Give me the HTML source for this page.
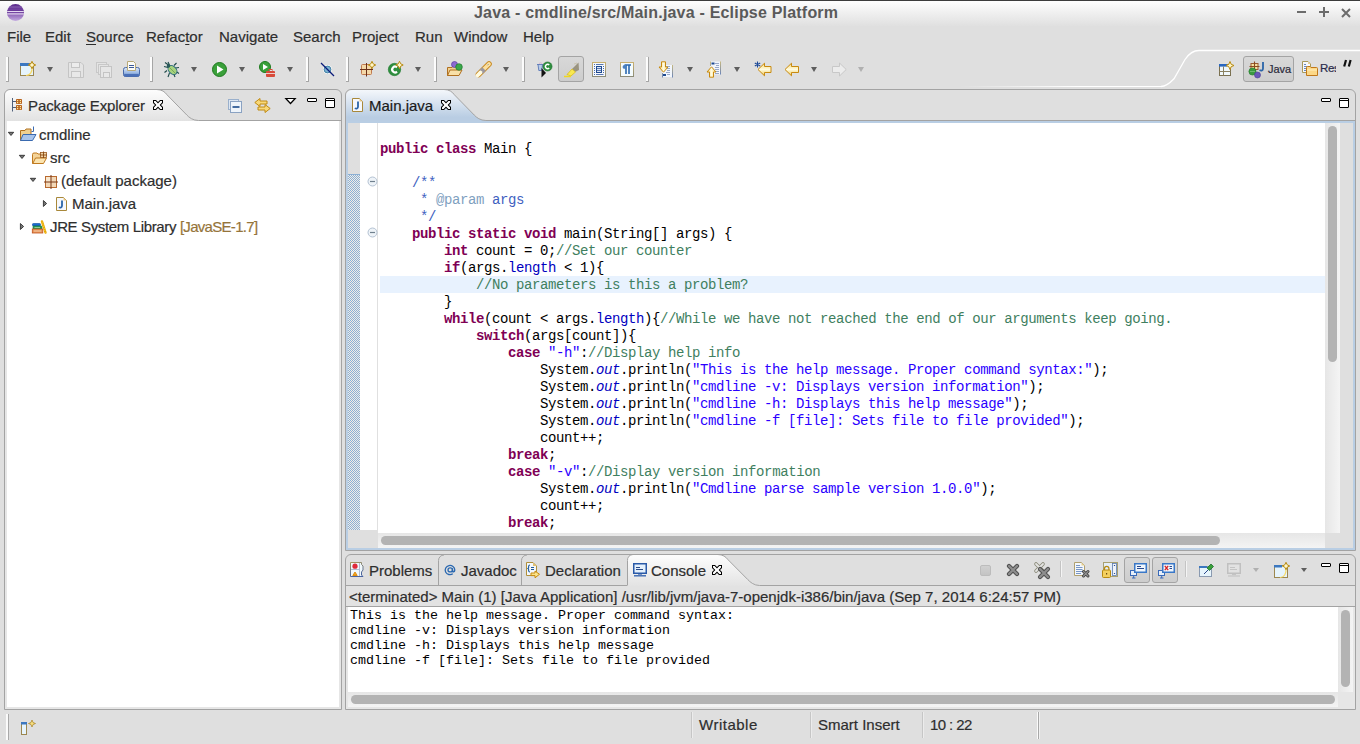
<!DOCTYPE html>
<html><head><meta charset="utf-8">
<style>
*{margin:0;padding:0;box-sizing:border-box}
html,body{width:1360px;height:744px;overflow:hidden;background:#dfdfdf;font-family:"Liberation Sans",sans-serif;position:relative}
.a{position:absolute}
svg{position:absolute;overflow:visible}
#title{left:0;top:0;width:1360px;height:26px;background:linear-gradient(#3c3c3c 0,#3c3c3c 1px,#fefefe 1px,#f4f4f4 9px,#e0e0e0 26px)}
#title .t{left:474px;top:3px;font-weight:bold;font-size:16px;line-height:19px;color:#5a5a5a;letter-spacing:0.2px;white-space:nowrap}
.m{top:28px;font-size:15px;line-height:17px;color:#2e2e2e;white-space:nowrap;-webkit-text-stroke:0.2px #2e2e2e}
.ui{font-size:15px;line-height:17px;color:#2e2e2e;white-space:nowrap;-webkit-text-stroke:0.2px currentColor}
.mono{font-family:"Liberation Mono",monospace}
.code{left:380px;top:124px;font-family:"Liberation Mono",monospace;font-size:14px;letter-spacing:-0.4px;line-height:17px;white-space:pre;color:#000}
.k{color:#7f0055;font-weight:bold}
.c{color:#3f7f5f}
.s{color:#2a00ff}
.f{color:#0000c0}
.jd{color:#3f5fbf}
.jt{color:#7f9fbf}
.o{color:#0000c0;font-style:italic}
.sep{width:3px;height:26px;top:56px;background:linear-gradient(90deg,#fcfcfc 0,#fcfcfc 2px,#a6a6a6 2px);border-bottom:1px solid #a6a6a6;border-top:1px solid #d8d8d8}
.dd{top:67px;width:0;height:0;border-left:3.5px solid transparent;border-right:3.5px solid transparent;border-top:5px solid #5e5e5e}
.ddg{border-top-color:#b0b0b0}
</style></head><body>
<!-- title bar -->
<div id="title" class="a">
  <div class="a t">Java - cmdline/src/Main.java - Eclipse Platform</div>
  <svg style="left:7px;top:4px" width="17" height="17" viewBox="0 0 17 17">
    <defs><linearGradient id="eg" x1="0" y1="0" x2="0" y2="1"><stop offset="0" stop-color="#5a2a8a"/><stop offset="0.45" stop-color="#7a4aa8"/><stop offset="1" stop-color="#c4ace0"/></linearGradient>
    <clipPath id="ec"><circle cx="8.5" cy="8.5" r="8.5"/></clipPath></defs>
    <circle cx="8.5" cy="8.5" r="8.5" fill="url(#eg)"/>
    <g clip-path="url(#ec)">
    <rect x="0" y="2.5" width="17" height="1" fill="#9a78c0" opacity="0.7"/>
    <rect x="0" y="7" width="17" height="1.2" fill="#e4d8f0"/>
    <rect x="0" y="8.3" width="17" height="0.9" fill="#6a3a9a"/>
    <rect x="0" y="9.3" width="17" height="1.2" fill="#e4d8f0"/>
    <rect x="0" y="6" width="17" height="1" fill="#6a3a9a"/>
    </g>
  </svg>
  <div class="a" style="left:1297px;top:11px;width:9px;height:2px;background:#6c6c6c"></div>
  <div class="a" style="left:1319px;top:11px;width:10px;height:2px;background:#6c6c6c"></div>
  <div class="a" style="left:1323px;top:7px;width:2px;height:10px;background:#6c6c6c"></div>
  <svg style="left:1341px;top:8px" width="10" height="10" viewBox="0 0 10 10"><path d="M1 1L9 9M9 1L1 9" stroke="#6c6c6c" stroke-width="2"/></svg>
</div>
<!-- menu -->
<div class="a m" style="left:7px">File</div>
<div class="a m" style="left:45px">Edit</div>
<div class="a m" style="left:86px"><u style="text-decoration-thickness:1px;text-underline-offset:2px">S</u>ource</div>
<div class="a m" style="left:146px">Refac<u style="text-decoration-thickness:1px;text-underline-offset:2px">t</u>or</div>
<div class="a m" style="left:219px">Navigate</div>
<div class="a m" style="left:293px">Search</div>
<div class="a m" style="left:352px">Project</div>
<div class="a m" style="left:415px">Run</div>
<div class="a m" style="left:454px">Window</div>
<div class="a m" style="left:523px">Help</div>
<!-- toolbar separators -->
<div class="a sep" style="left:6px"></div>
<div class="a sep" style="left:150px"></div>
<div class="a sep" style="left:306px"></div>
<div class="a sep" style="left:346px"></div>
<div class="a sep" style="left:434px"></div>
<div class="a sep" style="left:522px"></div>
<div class="a sep" style="left:646px"></div>
<!-- dropdowns -->
<div class="a dd" style="left:47px"></div>
<div class="a dd" style="left:191px"></div>
<div class="a dd" style="left:239px"></div>
<div class="a dd" style="left:287px"></div>
<div class="a dd" style="left:415px"></div>
<div class="a dd" style="left:503px"></div>
<div class="a dd" style="left:687px"></div>
<div class="a dd" style="left:734px"></div>
<div class="a dd" style="left:811px"></div>
<div class="a dd ddg" style="left:858px"></div>
<!-- new wizard -->
<svg style="left:20px;top:61px" width="16" height="16" viewBox="0 0 16 16">
 <rect x="0.5" y="2.5" width="13" height="12" fill="#e6f4fc" stroke="#9c8750"/>
 <rect x="0" y="2" width="9" height="3" fill="#3c78c0"/>
 <path d="M6 14.5C10 14.5 12.5 11 12 6" stroke="#f8d860" fill="none" stroke-width="1.2"/>
 <path d="M12 0.3L13.2 2.8L15.7 4L13.2 5.2L12 7.7L10.8 5.2L8.3 4L10.8 2.8Z" fill="#fff6c8" stroke="#b88a10" stroke-width="1"/>
</svg>
<!-- save (disabled) -->
<svg style="left:68px;top:62px" width="16" height="16" viewBox="0 0 16 16">
 <path d="M0.5 0.5H13L15.5 3V15.5H0.5Z" fill="#e4e4e4" stroke="#c4c4c4"/>
 <rect x="3.5" y="0.5" width="8" height="5" fill="#ececec" stroke="#c4c4c4"/>
 <rect x="3.5" y="9.5" width="9" height="6" fill="#e8e8e8" stroke="#c4c4c4"/>
</svg>
<!-- save all (disabled) -->
<svg style="left:96px;top:62px" width="16" height="16" viewBox="0 0 16 16">
 <rect x="0.5" y="0.5" width="10" height="10" fill="#e4e4e4" stroke="#c8c8c8"/>
 <rect x="2.5" y="2.5" width="10" height="10" fill="#e4e4e4" stroke="#c8c8c8"/>
 <rect x="4.5" y="4.5" width="11" height="11" fill="#e6e6e6" stroke="#c4c4c4"/>
 <rect x="7.5" y="10.5" width="6" height="5" fill="#e8e8e8" stroke="#c4c4c4"/>
</svg>
<!-- print -->
<svg style="left:123px;top:61px" width="17" height="17" viewBox="0 0 17 17">
 <defs><linearGradient id="pr" x1="0" y1="0" x2="0" y2="1"><stop offset="0" stop-color="#dce8f8"/><stop offset="0.6" stop-color="#9ab8e4"/><stop offset="1" stop-color="#4a72b8"/></linearGradient></defs>
 <rect x="0.5" y="6.5" width="16" height="9" rx="2" fill="url(#pr)" stroke="#4a6aa8"/>
 <path d="M4.5 0.5H10.5L12.5 2.5V9.5H4.5Z" fill="#fbfbf6" stroke="#b8a878"/>
 <path d="M6 4.5H11M6 6.5H11" stroke="#3a5a9a" stroke-width="1.1"/>
 <rect x="1" y="13" width="15" height="2.5" rx="1" fill="#4a70b8"/>
</svg>
<!-- debug bug -->
<svg style="left:163px;top:61px" width="17" height="17" viewBox="0 0 17 17">
 <g stroke="#1e4a4a" stroke-width="1.1" fill="none">
 <path d="M1 5.5L5 6.5M2 1.5L5.5 4M5 1L6.5 4"/>
 <path d="M4 9.5L1.5 11.5M6.5 12L5 16"/>
 <path d="M11 4.5L13.5 2M12.5 7L16 6.5"/>
 <path d="M13 10.5L16 12.5M10.5 12.5L12 16"/>
 </g>
 <ellipse cx="9.5" cy="9" rx="3.6" ry="5.2" transform="rotate(-45 9.5 9)" fill="#a6d27e" stroke="#2a6a7a" stroke-width="1"/>
 <path d="M7 7L12 12" stroke="#6aa050" stroke-width="0.8"/>
 <circle cx="5.5" cy="5" r="1.8" fill="#2a5a5a"/>
</svg>
<!-- run -->
<svg style="left:212px;top:62px" width="15" height="15" viewBox="0 0 15 15">
 <circle cx="7.5" cy="7.5" r="7" fill="#3aa03a" stroke="#1e7a1e"/>
 <path d="M5 3.5L11.5 7.5L5 11.5Z" fill="#fff"/>
</svg>
<!-- run ext -->
<svg style="left:259px;top:61px" width="17" height="17" viewBox="0 0 17 17">
 <circle cx="6" cy="6" r="5.5" fill="#3aa03a" stroke="#1e7a1e"/>
 <path d="M4 3L9 6L4 9Z" fill="#fff"/>
 <rect x="7" y="10" width="9" height="6" rx="1" fill="#d84a3a"/>
 <rect x="10" y="8.5" width="3" height="2" fill="none" stroke="#d84a3a"/>
 <path d="M7 12.5H16" stroke="#f0f0f0" stroke-width="0.8"/>
</svg>
<!-- skip breakpoints -->
<svg style="left:320px;top:62px" width="15" height="15" viewBox="0 0 15 15">
 <circle cx="7.5" cy="7.5" r="4.5" fill="#fff" opacity="0.8"/>
 <circle cx="7.5" cy="7.5" r="3.4" fill="#7ab0d0" stroke="#3a7aa0" stroke-width="0.9"/>
 <path d="M1 1L14 14" stroke="#0a1a7a" stroke-width="1.3"/>
</svg>
<!-- new package -->
<svg style="left:360px;top:61px" width="17" height="16" viewBox="0 0 17 16">
 <rect x="1.5" y="3.5" width="10" height="10" rx="1" fill="#f4d8a8" stroke="#c07a50"/>
 <path d="M6.5 2V15.5M0 8.5H13" stroke="#6a3018" stroke-width="1"/>
 <path d="M12 0.3L13.2 2.8L15.7 4L13.2 5.2L12 7.7L10.8 5.2L8.3 4L10.8 2.8Z" fill="#fff6c8" stroke="#b88a10" stroke-width="1"/>
</svg>
<!-- new class -->
<svg style="left:388px;top:61px" width="17" height="16" viewBox="0 0 17 16">
 <circle cx="6.5" cy="8.5" r="6.2" fill="#2e8e3e" stroke="#1e7a2e" stroke-width="0.6"/>
 <path d="M9 6.3A2.9 2.9 0 1 0 9 10.7" stroke="#fff" stroke-width="2.2" fill="none"/>
 <path d="M11.5 0.3L12.7 2.8L15.2 4L12.7 5.2L11.5 7.7L10.3 5.2L7.8 4L10.3 2.8Z" fill="#fff6c8" stroke="#b88a10" stroke-width="1"/>
</svg>
<!-- open type -->
<svg style="left:447px;top:61px" width="17" height="17" viewBox="0 0 17 17">
 <path d="M0.5 6.5H5L6 5H11V14.5H0.5Z" fill="#f0d090" stroke="#b07020"/>
 <path d="M0.5 14.5L3 9H15L12 14.5Z" fill="#f8e0a8" stroke="#b07020"/>
 <circle cx="7.5" cy="3.5" r="3" fill="#8a6ad0" stroke="#5a3aa0" stroke-width="0.7"/>
 <circle cx="12" cy="6" r="3.3" fill="#3aa84a" stroke="#1e7a2e" stroke-width="0.7"/>
</svg>
<!-- search pencil -->
<svg style="left:475px;top:61px" width="17" height="17" viewBox="0 0 17 17">
 <path d="M14 3L3.5 13.5" stroke="#c88a20" stroke-width="5.6" stroke-linecap="round"/>
 <path d="M14 3L3.5 13.5" stroke="#fbe0a0" stroke-width="3.8" stroke-linecap="round"/>
 <path d="M9 8L6 11" stroke="#9c98a0" stroke-width="5"/>
 <path d="M5.5 11.5L2.5 14.5" stroke="#fffbe0" stroke-width="3.6" stroke-linecap="round"/>
 <path d="M12.5 4.2L13.2 3.5" stroke="#2a5aa8" stroke-width="1"/>
</svg>
<!-- mark occurrences-ish icon (partial) -->
<svg style="left:536px;top:61px" width="17" height="17" viewBox="0 0 17 17">
 <path d="M1 3.5H7.5M2 3.5L2.8 9.5H5.8L6.5 3.5" fill="#b8cce8" stroke="#5a78b8" stroke-width="0.9"/>
 <path d="M3 2.5Q4.5 1 6 2.5" stroke="#d8a8d0" fill="none" stroke-width="0.8"/>
 <circle cx="11.5" cy="5.5" r="4.6" fill="#2e8e3e" stroke="#1a6a2a" stroke-width="0.5"/>
 <path d="M13.2 4A2.2 2.2 0 1 0 13.2 7" stroke="#fff" stroke-width="1.5" fill="none"/>
 <path d="M5.5 7V16.5L10 12Z" fill="#111"/>
</svg>
<!-- pressed highlight button -->
<div class="a" style="left:558px;top:56px;width:26px;height:26px;border:1px solid #a4a4a4;border-radius:3px;background:linear-gradient(#d8d8d8,#d4d4d4 40%,#cdcdcd)"></div>
<svg style="left:563px;top:61px" width="17" height="17" viewBox="0 0 17 17">
 <path d="M9 8L15.5 1.5L16 9L12 11Z" fill="#9a9480"/>
 <path d="M11 3L14 2" stroke="#c8c0a8" stroke-width="0.8"/>
 <path d="M4 13.5L9 8L12.5 11L8 15Z" fill="#f8e850" stroke="#d8b810" stroke-width="0.7"/>
 <path d="M1 15.5H8" stroke="#f0d820" stroke-width="1.5"/>
</svg>
<!-- block selection -->
<svg style="left:592px;top:62px" width="14" height="15" viewBox="0 0 14 15">
 <defs><linearGradient id="bx" x1="0" y1="0" x2="0" y2="1"><stop offset="0" stop-color="#c8b070"/><stop offset="1" stop-color="#8c8c78"/></linearGradient></defs>
 <rect x="0.5" y="0.5" width="13" height="14" fill="#f6f9fd" stroke="url(#bx)"/>
 <g fill="#4a6aa8"><rect x="2" y="2" width="1" height="1"/><rect x="2" y="4" width="1" height="1"/><rect x="2" y="6" width="1" height="1"/><rect x="2" y="8" width="1" height="1"/><rect x="2" y="10" width="1" height="1"/><rect x="2" y="12" width="1" height="1"/>
 <rect x="11" y="4" width="1" height="1"/><rect x="11" y="6" width="1" height="1"/><rect x="11" y="8" width="1" height="1"/><rect x="11" y="10" width="1" height="1"/></g>
 <path d="M4 2.5H11.5M4 12.5H11.5" stroke="#5a78b0"/>
 <rect x="4.5" y="4.5" width="5" height="6" fill="#dce6f4" stroke="#1e4a90"/>
 <path d="M5 6.5H9M5 8.5H9" stroke="#3a5aa0" stroke-width="0.8"/>
</svg>
<!-- show whitespace -->
<svg style="left:620px;top:62px" width="14" height="15" viewBox="0 0 14 15">
 <rect x="0.5" y="0.5" width="13" height="14" fill="#f4fbfd" stroke="url(#bx)"/>
 <path d="M4.5 3H11M6 3V12M9 3V12" stroke="#2a68b0" stroke-width="1.6"/>
 <path d="M6 3H4.5A1.8 1.8 0 0 0 4.5 6.8H6Z" fill="#4a80c0"/>
</svg>
<!-- next annotation -->
<svg style="left:659px;top:61px" width="16" height="17" viewBox="0 0 16 17">
 <defs><linearGradient id="ar" x1="0" y1="0" x2="1" y2="0"><stop offset="0" stop-color="#f8d870"/><stop offset="0.5" stop-color="#fffbe0"/><stop offset="1" stop-color="#f8d870"/></linearGradient>
 <linearGradient id="pgr" x1="0" y1="0" x2="0" y2="1"><stop offset="0" stop-color="#c8b880"/><stop offset="1" stop-color="#6a84b8"/></linearGradient></defs>
 <rect x="3" y="4" width="10" height="12" fill="#f2f6fc"/>
 <path d="M3.5 12V16.5M13.5 4V16.5" stroke="url(#pgr)"/>
 <path d="M7 5.5H11M8 7.5H11M8 9.5H11M7 11.5H11M8 13.5H11" stroke="#98a8c8" stroke-width="1"/>
 <rect x="4" y="13" width="3" height="2" fill="#1e4a90"/>
 <path d="M2.5 0.8H6.5V6H9L4.5 11.2L0 6H2.5Z" fill="url(#ar)" stroke="#c88a10" stroke-width="1"/>
</svg>
<!-- prev annotation -->
<svg style="left:707px;top:61px" width="16" height="17" viewBox="0 0 16 17">
 <rect x="3" y="0.5" width="10" height="13" fill="#f2f6fc"/>
 <path d="M3.5 0.5V5M13.5 0.5V13.5" stroke="url(#pgr)"/>
 <path d="M8 2.5H12M9 4.5H12M8 6.5H12M8 8.5H12M9 10.5H12M8 12.5H12" stroke="#98a8c8" stroke-width="1"/>
 <rect x="4.5" y="1.5" width="3" height="2" fill="#1e4a90"/>
 <path d="M2.5 16.2H6.5V11H9L4.5 5.8L0 11H2.5Z" fill="url(#ar)" stroke="#c88a10" stroke-width="1"/>
</svg>
<!-- last edit location -->
<svg style="left:754px;top:61px" width="18" height="16" viewBox="0 0 18 16">
 <defs><linearGradient id="arv" x1="0" y1="0" x2="0" y2="1"><stop offset="0" stop-color="#f8d870"/><stop offset="0.5" stop-color="#fffbe0"/><stop offset="1" stop-color="#f0c850"/></linearGradient></defs>
 <path d="M17 5.5H10.5V2.2L4 8.5L10.5 14.8V11.5H17Z" fill="url(#arv)" stroke="#c88a10"/>
 <path d="M3.5 0.5V6.5M0.8 2L6.2 5M6.2 2L0.8 5" stroke="#1e4a98" stroke-width="1.1"/>
</svg>
<!-- back -->
<svg style="left:784px;top:62px" width="16" height="15" viewBox="0 0 16 15">
 <path d="M14.5 4.5H7.5V1.2L1 7.5L7.5 13.8V10.5H14.5Z" fill="url(#arv)" stroke="#c88a10"/>
</svg>
<!-- forward disabled -->
<svg style="left:832px;top:62px" width="16" height="15" viewBox="0 0 16 15">
 <path d="M0.5 4.5H7.5V1L14.2 7.5L7.5 14V10.5H0.5Z" fill="#ececec" stroke="#c8c8c8"/>
</svg>

<!-- ============ PACKAGE EXPLORER ============ -->
<div class="a" style="left:4px;top:89px;width:338px;height:621px;border:1px solid #a3a3a3;border-radius:6px 6px 0 0;background:#dfdfdf"></div>
<svg style="left:4px;top:89px" width="201" height="32" viewBox="-1 0 201 32">
 <defs><linearGradient id="tg" x1="0" y1="0" x2="0" y2="1"><stop offset="0" stop-color="#fdfdfd"/><stop offset="1" stop-color="#e2e2e2"/></linearGradient></defs>
 <path d="M0 32V6.5A5.5 5.5 0 0 1 5.5 1H151.6C157 0.5 160 3 162 5.8 L181.8 26 C184 28.5 188 31.5 193.5 31.5H200V32Z" fill="url(#tg)"/>
 <path d="M151.6 0.5C157 0.5 160 3 162 5.8 L181.8 26 C184 28.5 188 31.5 193.5 31.5H200" fill="none" stroke="#a3a3a3"/>
</svg>
<div class="a" style="left:199px;top:120px;width:142px;height:1px;background:#a3a3a3"></div>
<div class="a" style="left:5px;top:121px;width:336px;height:588px;background:#e6e6e6"></div>
<div class="a" style="left:7px;top:121px;width:332px;height:586px;background:#fff"></div>
<!-- PE tab -->
<svg style="left:12px;top:98px" width="10" height="14" viewBox="0 0 10 14">
 <path d="M0.5 0V13.5M0.5 3.5H4M0.5 9.5H4" stroke="#50607a" fill="none"/>
 <rect x="4" y="1" width="6" height="5" rx="0.8" fill="#b8641e"/>
 <rect x="4" y="7" width="6" height="5" rx="0.8" fill="#b8641e"/>
 <rect x="5" y="2" width="1.2" height="1.2" fill="#ffe8a0"/><rect x="7.8" y="2" width="1.2" height="1.2" fill="#ffe8a0"/>
 <rect x="5" y="4" width="1.2" height="1.2" fill="#ffe8a0"/><rect x="7.8" y="4" width="1.2" height="1.2" fill="#ffe8a0"/>
 <rect x="5" y="8" width="1.2" height="1.2" fill="#ffe8a0"/><rect x="7.8" y="8" width="1.2" height="1.2" fill="#ffe8a0"/>
 <rect x="5" y="10" width="1.2" height="1.2" fill="#ffe8a0"/><rect x="7.8" y="10" width="1.2" height="1.2" fill="#ffe8a0"/>
</svg>
<div class="a ui" style="left:28px;top:97px;letter-spacing:-0.1px">Package Explorer</div>
<svg style="left:153px;top:100px" width="10" height="10" viewBox="0 0 10 10"><path d="M0 0H3L5 2L7 0H10V3L8 5L10 7V10H7L5 8L3 10H0V7L2 5L0 3Z" fill="#000"/><path d="M1 1H2.6L5 3.4L7.4 1H9V2.6L6.6 5L9 7.4V9H7.4L5 6.6L2.6 9H1V7.4L3.4 5L1 2.6Z" fill="#fff"/></svg>
<!-- PE view toolbar -->
<svg style="left:228px;top:99px" width="14" height="14" viewBox="0 0 14 14">
 <rect x="0.5" y="0.5" width="10" height="10" fill="#dce6f2" stroke="#9ab0cc"/>
 <rect x="2.5" y="2.5" width="11" height="11" fill="#eef4fa" stroke="#8aa2c2"/>
 <path d="M4.5 8H11.5" stroke="#1a4a8a" stroke-width="1.6"/>
</svg>
<svg style="left:254px;top:98px" width="17" height="15" viewBox="0 0 17 15">
 <path d="M6 0.5L0.8 4.5L6 8.5V6H13V3H6Z" fill="#f8d878" stroke="#c08a10"/>
 <path d="M11 6.5L16.2 10.5L11 14.5V12H4V9H11Z" fill="#f8d878" stroke="#c08a10"/>
</svg>
<svg style="left:285px;top:98px" width="11" height="6" viewBox="0 0 11 6"><path d="M0.8 0.5H10.2L5.5 5.5Z" fill="#fff" stroke="#000" stroke-width="1.2"/></svg>
<div class="a" style="left:307px;top:98px;width:10px;height:4px;border:1px solid #000;border-radius:1px;background:#fff"></div>
<div class="a" style="left:325px;top:98px;width:10px;height:10px;border:1px solid #000;border-radius:1px;background:linear-gradient(#fff 0,#fff 1px,#000 1px,#000 2px,#fff 2px)"></div>
<!-- PE tree -->
<svg style="left:8px;top:132px" width="6" height="4" viewBox="0 0 6 4"><path d="M0.3 0.3H5.7L3 3.5Z" fill="#777" stroke="#222" stroke-width="0.8" stroke-linejoin="round"/></svg>
<svg style="left:20px;top:126px" width="17" height="16" viewBox="0 0 17 16">
 <path d="M0.5 4.5H5L6 3H11V14.5H0.5Z" fill="#f0d090" stroke="#b07020"/>
 <path d="M0.5 14.5L3 8.5H16L12.5 14.5Z" fill="#a8c4ec" stroke="#3a6ab0"/>
 <path d="M13.5 0.5V5.5H11.5" stroke="#3a6ab0" fill="none"/>
</svg>
<div class="a ui" style="left:39px;top:126px">cmdline</div>
<svg style="left:19px;top:155px" width="6" height="4" viewBox="0 0 6 4"><path d="M0.3 0.3H5.7L3 3.5Z" fill="#777" stroke="#222" stroke-width="0.8" stroke-linejoin="round"/></svg>
<svg style="left:32px;top:151px" width="16" height="14" viewBox="0 0 16 14">
 <path d="M0.5 3.5A1.5 1.5 0 0 1 2 2H5L6 3H10V12.5H0.5Z" fill="#f4d49a" stroke="#c07a20"/>
 <path d="M0.8 12.5L3.5 7H14.5L11.5 12.5Z" fill="#fbe4b0" stroke="#c07a20"/>
 <rect x="8.5" y="1.5" width="6" height="5" fill="#f0d4a8" stroke="#9a5a20" stroke-width="0.8"/>
 <path d="M11.5 0.5V7M8 4H15" stroke="#8a4a10" stroke-width="0.9"/>
</svg>
<div class="a ui" style="left:50px;top:149px">src</div>
<svg style="left:30px;top:178px" width="6" height="4" viewBox="0 0 6 4"><path d="M0.3 0.3H5.7L3 3.5Z" fill="#777" stroke="#222" stroke-width="0.8" stroke-linejoin="round"/></svg>
<svg style="left:44px;top:175px" width="14" height="14" viewBox="0 0 14 14">
 <rect x="1.5" y="1.5" width="11" height="11" fill="#f2d8b8" stroke="#b86a30"/>
 <rect x="2" y="2" width="4.5" height="4.5" fill="#f8e8d0"/>
 <path d="M7 0V14M0 7H14" stroke="#7a3a18" stroke-width="1"/>
</svg>
<div class="a ui" style="left:61px;top:172px">(default package)</div>
<svg style="left:43px;top:200px" width="4" height="7" viewBox="0 0 4 7"><path d="M0.4 0.5V6.5L3.6 3.5Z" fill="#777" stroke="#222" stroke-width="0.8" stroke-linejoin="round"/></svg>
<svg style="left:56px;top:197px" width="11" height="14" viewBox="0 0 11 14">
 <path d="M0.5 0.5H7.5L10.5 3.5V13.5H0.5Z" fill="#f6f8fc" stroke="#a8883a"/>
 <path d="M7.5 0.5V3.5H10.5Z" fill="#e8c888"/>
 <path d="M6 3.5V8.8C6 10.6 4.5 11 2.8 10.2" stroke="#2a64a8" stroke-width="1.8" fill="none"/>
</svg>
<div class="a ui" style="left:72px;top:195px">Main.java</div>
<svg style="left:20px;top:223px" width="4" height="7" viewBox="0 0 4 7"><path d="M0.4 0.5V6.5L3.6 3.5Z" fill="#777" stroke="#222" stroke-width="0.8" stroke-linejoin="round"/></svg>
<svg style="left:32px;top:220px" width="16" height="14" viewBox="0 0 16 14">
 <rect x="0.5" y="3.5" width="8" height="2.5" rx="0.8" fill="#1a6ad0" stroke="#0a4aa0" stroke-width="0.6"/>
 <rect x="1" y="6" width="9" height="3" rx="0.5" fill="#2a9a5a" stroke="#107a3a" stroke-width="0.6"/>
 <path d="M2.5 7.5H8" stroke="#a0d8a8" stroke-width="0.8"/>
 <rect x="0.3" y="9" width="10.5" height="4" fill="#e89a60" stroke="#c0501a" stroke-width="0.8"/>
 <path d="M2 11H9" stroke="#f4c8a0" stroke-width="1"/>
 <path d="M10 1.5L13.5 12.5" stroke="#e8a800" stroke-width="2.4" stroke-linecap="round"/>
 <path d="M10 1.5L13.5 12.5" stroke="#f8d040" stroke-width="1" stroke-dasharray="1.2 1"/>
</svg>
<div class="a ui" style="left:50px;top:218px;letter-spacing:-0.36px">JRE System Library <span style="color:#95743a;letter-spacing:-0.7px">[JavaSE-1.7]</span></div>

<!-- ============ EDITOR ============ -->
<div class="a" style="left:345px;top:89px;width:1011px;height:462px;border:1px solid #a3a3a3;border-radius:6px 6px 0 0;background:#dfdfdf"></div>
<svg style="left:345px;top:89px" width="145" height="33" viewBox="0 0 145 33">
 <defs><linearGradient id="bg1" x1="0" y1="0" x2="0" y2="1"><stop offset="0" stop-color="#f4f7fb"/><stop offset="0.85" stop-color="#b9cde3"/><stop offset="1" stop-color="#b9cde3"/></linearGradient></defs>
 <path d="M1 33V7A6 6 0 0 1 7 1H99C104.4 0.5 107.4 3 109.4 5.8 L129.2 26 C131.4 28.5 135.4 31.5 140.9 31.5H145V33Z" fill="url(#bg1)"/>
 <path d="M99 0.5C104.4 0.5 107.4 3 109.4 5.8 L129.2 26 C131.4 28.5 135.4 31.5 140.9 31.5H145" fill="none" stroke="#a3a3a3"/>
</svg>
<div class="a" style="left:488px;top:120px;width:867px;height:1px;background:#a3a3a3"></div>
<div class="a" style="left:346px;top:121px;width:1009px;height:429px;background:#b9cee4"></div>
<div class="a" style="left:348px;top:123px;width:1005px;height:425px;background:#dfdfdf"></div>
<svg style="left:352px;top:98px" width="11" height="14" viewBox="0 0 11 14">
 <path d="M0.5 0.5H7.5L10.5 3.5V13.5H0.5Z" fill="#f6f8fc" stroke="#a8883a"/>
 <path d="M7.5 0.5V3.5H10.5Z" fill="#e8c888"/>
 <path d="M6 3.5V8.8C6 10.6 4.5 11 2.8 10.2" stroke="#2a64a8" stroke-width="1.8" fill="none"/>
</svg>
<div class="a ui" style="left:369px;top:97px;color:#1a1a1a">Main.java</div>
<svg style="left:441px;top:100px" width="10" height="10" viewBox="0 0 10 10"><path d="M0 0H3L5 2L7 0H10V3L8 5L10 7V10H7L5 8L3 10H0V7L2 5L0 3Z" fill="#000"/><path d="M1 1H2.6L5 3.4L7.4 1H9V2.6L6.6 5L9 7.4V9H7.4L5 6.6L2.6 9H1V7.4L3.4 5L1 2.6Z" fill="#fff"/></svg>
<div class="a" style="left:1321px;top:98px;width:10px;height:4px;border:1px solid #000;border-radius:1px;background:#fff"></div>
<div class="a" style="left:1339px;top:98px;width:10px;height:10px;border:1px solid #000;border-radius:1px;background:linear-gradient(#fff 0,#fff 1px,#000 1px,#000 2px,#fff 2px)"></div>
<!-- editor content -->
<div class="a" style="left:348px;top:174px;width:12px;height:356px;border-top:1px solid #8cb0d4;background-color:#f0ede8;background-image:linear-gradient(45deg,#8cb0d4 25%,transparent 25%,transparent 75%,#8cb0d4 75%),linear-gradient(45deg,#8cb0d4 25%,transparent 25%,transparent 75%,#8cb0d4 75%);background-size:2px 2px;background-position:0 0,1px 1px"></div>
<div class="a" style="left:360px;top:123px;width:17px;height:407px;background:#fff"></div>
<div class="a" style="left:377px;top:123px;width:1px;height:410px;background:#e0e0e0"></div>
<div class="a" style="left:378px;top:123px;width:947px;height:410px;background:#fff"></div>
<div class="a" style="left:380px;top:276px;width:945px;height:17px;background:#e8f2fe"></div>
<!-- fold markers -->
<svg style="left:367px;top:176px" width="11" height="11" viewBox="0 0 11 11"><circle cx="5.5" cy="5.5" r="4.5" fill="#eef3f8" stroke="#b4c2d2"/><path d="M3 5.5H8" stroke="#70808e" stroke-width="1.2"/></svg>
<svg style="left:367px;top:227px" width="11" height="11" viewBox="0 0 11 11"><circle cx="5.5" cy="5.5" r="4.5" fill="#eef3f8" stroke="#b4c2d2"/><path d="M3 5.5H8" stroke="#70808e" stroke-width="1.2"/></svg>
<!-- vertical scrollbar -->
<div class="a" style="left:1325px;top:123px;width:15px;height:410px;background:linear-gradient(90deg,#e6e6e6,#f4f4f4)"></div>
<div class="a" style="left:1328px;top:126px;width:9px;height:236px;border-radius:5px;background:#b3b3b3"></div>
<!-- horizontal scrollbar -->
<div class="a" style="left:378px;top:533px;width:947px;height:15px;background:linear-gradient(#e6e6e6,#f4f4f4)"></div>
<div class="a" style="left:381px;top:536px;width:839px;height:9px;border-radius:5px;background:#b3b3b3"></div>
<div class="a code">
<span class="k">public</span> <span class="k">class</span> Main {

    <span class="jd">/**</span>
<span class="jd">     * </span><span class="jt">@param</span><span class="jd"> args</span>
<span class="jd">     */</span>
    <span class="k">public</span> <span class="k">static</span> <span class="k">void</span> main(String[] args) {
        <span class="k">int</span> count = 0;<span class="c">//Set our counter</span>
        <span class="k">if</span>(args.<span class="f">length</span> &lt; 1){
            <span class="c">//No parameters is this a problem?</span>
        }
        <span class="k">while</span>(count &lt; args.<span class="f">length</span>){<span class="c">//While we have not reached the end of our arguments keep going.</span>
            <span class="k">switch</span>(args[count]){
                <span class="k">case</span> <span class="s">"-h"</span>:<span class="c">//Display help info</span>
                    System.<span class="o">out</span>.println(<span class="s">"This is the help message. Proper command syntax:"</span>);
                    System.<span class="o">out</span>.println(<span class="s">"cmdline -v: Displays version information"</span>);
                    System.<span class="o">out</span>.println(<span class="s">"cmdline -h: Displays this help message"</span>);
                    System.<span class="o">out</span>.println(<span class="s">"cmdline -f [file]: Sets file to file provided"</span>);
                    count++;
                <span class="k">break</span>;
                <span class="k">case</span> <span class="s">"-v"</span>:<span class="c">//Display version information</span>
                    System.<span class="o">out</span>.println(<span class="s">"Cmdline parse sample version 1.0.0"</span>);
                    count++;
                <span class="k">break</span>;</div>


<!-- ============ CONSOLE ============ -->
<div class="a" style="left:345px;top:554px;width:1011px;height:156px;border:1px solid #a3a3a3;border-radius:6px 6px 0 0;background:#dfdfdf"></div>
<!-- inactive tabs -->
<svg style="left:345px;top:554px" width="420" height="32" viewBox="0 0 420 32">
 <defs><linearGradient id="cg" x1="0" y1="0" x2="0" y2="1"><stop offset="0" stop-color="#fdfdfd"/><stop offset="1" stop-color="#e3e3e3"/></linearGradient></defs>
 <path d="M1 31.5H282" stroke="#a3a3a3"/>
 <path d="M93.5 31V6.5A5.5 5.5 0 0 1 99 1M176.5 31V6.5A5.5 5.5 0 0 1 182 1" fill="none" stroke="#a3a3a3"/>
 <path d="M282 32V6.5A5.5 5.5 0 0 1 287.5 1H372.6C378 0.5 381 3 383 5.7 L402.8 25.6 C405 28 409 31.5 414.5 31.5H420V32Z" fill="url(#cg)"/>
 <path d="M282.5 31.5V6.5A5.5 5.5 0 0 1 288 0.5H372.6C378 0.5 381 3 383 5.7 L402.8 25.6 C405 28 409 31.5 414.5 31.5H420" fill="none" stroke="#a3a3a3"/>
</svg>
<div class="a" style="left:764px;top:585px;width:591px;height:1px;background:#a3a3a3"></div>
<div class="a" style="left:346px;top:586px;width:1009px;height:20px;background:#e2e2e2"></div>
<div class="a" style="left:346px;top:606px;width:1009px;height:1px;background:#a3a3a3"></div>
<div class="a" style="left:346px;top:607px;width:1009px;height:102px;background:#e6e6e6"></div>
<div class="a" style="left:348px;top:607px;width:990px;height:85px;background:#fff"></div>
<!-- console vscroll -->
<div class="a" style="left:1338px;top:607px;width:15px;height:85px;background:linear-gradient(90deg,#e6e6e6,#f4f4f4)"></div>
<div class="a" style="left:1341px;top:610px;width:9px;height:77px;border-radius:5px;background:#b3b3b3"></div>
<div class="a" style="left:348px;top:692px;width:990px;height:15px;background:linear-gradient(#e6e6e6,#f4f4f4)"></div>
<div class="a" style="left:351px;top:695px;width:984px;height:9px;border-radius:5px;background:#b3b3b3"></div>
<div class="a" style="left:1338px;top:692px;width:15px;height:15px;background:#e6e6e6"></div>
<!-- console tab labels -->
<svg style="left:350px;top:562px" width="14" height="15" viewBox="0 0 14 15">
 <defs><linearGradient id="pb" x1="0" y1="0" x2="0.3" y2="1"><stop offset="0" stop-color="#a89a60"/><stop offset="1" stop-color="#4a64a0"/></linearGradient></defs>
 <path d="M0.5 0.5H11.5V2.5L13 4V8L11.5 10V13L13 14.5H0.5Z" fill="#f0f8fc" stroke="url(#pb)"/>
 <path d="M9.5 1V14M1 7.5H9.5" stroke="#b0bcd0"/>
 <circle cx="5" cy="4.2" r="2.6" fill="#e02a3a"/>
 <path d="M2.8 13.5L5 10L7.2 13.5Z" fill="#f0a020" stroke="#e09010" stroke-width="1"/>
</svg>
<div class="a ui" style="left:369px;top:562px">Problems</div>
<svg style="left:445px;top:565px" width="11" height="10" viewBox="0 0 11 10"><path d="M7.5 3.2V6.3C7.5 7.3 9.8 7.3 9.8 5A4.8 4.6 0 1 0 7.8 8.8" fill="none" stroke="#2a68b0" stroke-width="1.3"/><ellipse cx="5.2" cy="4.9" rx="2.2" ry="2" fill="none" stroke="#2a68b0" stroke-width="1.3"/></svg>
<div class="a ui" style="left:461px;top:562px">Javadoc</div>
<svg style="left:526px;top:562px" width="15" height="17" viewBox="0 0 15 17">
 <path d="M0.5 0.5H7L10.5 4V13.5H0.5Z" fill="#f4f8fc" stroke="#b0903a"/>
 <path d="M7 0.5V4H10.5Z" fill="#e0c070"/>
 <path d="M4 3Q2.6 3 2.6 4.5V5.8L1.8 6.5L2.6 7.2V8.5Q2.6 10 4 10" stroke="#1e5a9a" stroke-width="1.1" fill="none"/>
 <path d="M5 5.5H8M5 7.5H8" stroke="#1e5a9a" stroke-width="1.2"/>
 <path d="M5 11H9V9L13.5 12.3L9 15.8V13.6H5Z" fill="#fbe48a" stroke="#c88a10" stroke-width="1"/>
</svg>
<div class="a ui" style="left:545px;top:562px">Declaration</div>
<svg style="left:633px;top:563px" width="14" height="14" viewBox="0 0 14 14">
 <rect x="0.75" y="0.75" width="12.5" height="9.5" fill="#e4f0fc" stroke="#2a5aa8" stroke-width="1.5"/>
 <path d="M3 4.5H7M3 6.5H10" stroke="#2a4a88" stroke-width="1"/>
 <path d="M5 11H9" stroke="#2a5aa8" stroke-width="1.2"/>
 <path d="M1 12.8H13" stroke="#3a68b0" stroke-width="1.4"/>
</svg>
<div class="a ui" style="left:651px;top:562px">Console</div>
<svg style="left:712px;top:565px" width="10" height="10" viewBox="0 0 10 10"><path d="M0 0H3L5 2L7 0H10V3L8 5L10 7V10H7L5 8L3 10H0V7L2 5L0 3Z" fill="#000"/><path d="M1 1H2.6L5 3.4L7.4 1H9V2.6L6.6 5L9 7.4V9H7.4L5 6.6L2.6 9H1V7.4L3.4 5L1 2.6Z" fill="#fff"/></svg>
<div class="a ui" style="left:349px;top:588px">&lt;terminated&gt; Main (1) [Java Application] /usr/lib/jvm/java-7-openjdk-i386/bin/java (Sep 7, 2014 6:24:57 PM)</div>
<div class="a mono" style="left:350px;top:608px;font-size:13.33px;line-height:15px;white-space:pre;color:#000">This is the help message. Proper command syntax:
cmdline -v: Displays version information
cmdline -h: Displays this help message
cmdline -f [file]: Sets file to file provided</div>
<!-- console toolbar -->
<div class="a" style="left:980px;top:565px;width:11px;height:11px;border:1px solid #bcbcbc;border-radius:2px;background:linear-gradient(#d0d0d0,#c4c4c4)"></div>
<svg style="left:1007px;top:564px" width="12" height="12" viewBox="0 0 12 12"><path d="M2 2L10 10M10 2L2 10" stroke="#505050" stroke-width="4.2" stroke-linecap="round"/><path d="M2 2L10 10M10 2L2 10" stroke="#8e8e8e" stroke-width="2.2" stroke-linecap="round"/></svg>
<svg style="left:1034px;top:562px" width="16" height="17" viewBox="0 0 16 17"><path d="M2 2L9 9M9 2L2 9" stroke="#8a8a78" stroke-width="3.6" stroke-linecap="round"/><path d="M2 2L9 9M9 2L2 9" stroke="#e4e4e4" stroke-width="1.8" stroke-linecap="round"/><path d="M6 7L14 15M14 7L6 15" stroke="#505050" stroke-width="4.2" stroke-linecap="round"/><path d="M6 7L14 15M14 7L6 15" stroke="#8e8e8e" stroke-width="2.2" stroke-linecap="round"/></svg>
<div class="a" style="left:1060px;top:561px;width:2px;height:16px;background:linear-gradient(90deg,#c4c4c4 0,#c4c4c4 1px,#f4f4f4 1px)"></div>
<svg style="left:1074px;top:562px" width="16" height="16" viewBox="0 0 16 16">
 <path d="M0.5 0.5H7.5L10.5 3.5V13.5H0.5Z" fill="#f4f8fc" stroke="#b0a070"/>
 <path d="M7.5 0.5V3.5H10.5Z" fill="#e8d090"/>
 <path d="M2 3.5H6M2 5.5H8.5M2 7.5H8.5M2 9.5H8.5M2 11.5H7" stroke="#6a8ac0" stroke-width="0.9"/>
 <path d="M9.5 9.5L14 14M14 9.5L9.5 14" stroke="#404040" stroke-width="3" stroke-linecap="round"/>
 <path d="M9.5 9.5L14 14M14 9.5L9.5 14" stroke="#909090" stroke-width="1.2" stroke-linecap="round"/>
</svg>
<svg style="left:1102px;top:562px" width="16" height="17" viewBox="0 0 16 17">
 <rect x="1.5" y="0.5" width="14" height="14" fill="#e4eef8" stroke="#a8a070"/>
 <rect x="10.5" y="1.5" width="4" height="12" fill="#f0f4fa" stroke="#5a7ab0" stroke-width="0.8"/>
 <path d="M12.5 3V4M12.5 11V12" stroke="#2a4a90" stroke-width="1.2"/>
 <path d="M2.5 8V6.5A2.2 2.2 0 0 1 6.9 6.5V8" stroke="#b88a10" fill="none" stroke-width="1.2"/>
 <rect x="0.5" y="8" width="8" height="7.5" rx="1" fill="#f4d060" stroke="#b88a10"/>
 <rect x="4" y="11" width="1.2" height="1.5" fill="#6a4a10"/>
</svg>
<div class="a" style="left:1124px;top:557px;width:26px;height:26px;border:1px solid #a4a4a4;border-radius:3px;background:linear-gradient(#d8d8d8,#d4d4d4 40%,#cdcdcd)"></div>
<div class="a" style="left:1152px;top:557px;width:26px;height:26px;border:1px solid #a4a4a4;border-radius:3px;background:linear-gradient(#d8d8d8,#d4d4d4 40%,#cdcdcd)"></div>
<svg style="left:1130px;top:563px" width="17" height="16" viewBox="0 0 17 16">
 <rect x="0.5" y="7.5" width="6" height="5" fill="#e8f0fa" stroke="#3a6ab8"/>
 <path d="M2 15H5.5M3.7 12.5V15" stroke="#3a6ab8"/>
 <rect x="4.75" y="0.75" width="11.5" height="8.5" fill="#f0f6fc" stroke="#3a78c8" stroke-width="1.5"/>
 <path d="M7 3.5H11M7 5.5H14" stroke="#2a4a90" stroke-width="1"/>
</svg>
<svg style="left:1158px;top:563px" width="17" height="16" viewBox="0 0 17 16">
 <rect x="0.5" y="7.5" width="6" height="5" fill="#e8f0fa" stroke="#3a6ab8"/>
 <path d="M2 15H5.5M3.7 12.5V15" stroke="#3a6ab8"/>
 <rect x="4.75" y="0.75" width="11.5" height="8.5" fill="#f0f6fc" stroke="#3a78c8" stroke-width="1.5"/>
 <path d="M6.8 2.8L10.2 7.2M10.2 2.8L6.8 7.2" stroke="#d82020" stroke-width="1.3"/>
 <path d="M11.5 3.5H14M11.5 5.5H14" stroke="#2a4a90" stroke-width="1"/>
</svg>
<div class="a" style="left:1185px;top:561px;width:2px;height:16px;background:linear-gradient(90deg,#c4c4c4 0,#c4c4c4 1px,#f4f4f4 1px)"></div>
<svg style="left:1199px;top:563px" width="15" height="14" viewBox="0 0 15 14">
 <rect x="0.5" y="3.5" width="12" height="10" fill="#e6f4fc" stroke="#8a9ab0"/>
 <rect x="0" y="3" width="8" height="2" fill="#3c78c0"/>
 <path d="M5 11L9 7" stroke="#2a4a8a"/>
 <path d="M8 5L12 1L14.5 3.5L10.5 7.5Z" fill="#3aa03a" stroke="#1e6e2e" stroke-width="0.8"/>
</svg>
<svg style="left:1227px;top:563px" width="14" height="14" viewBox="0 0 14 14">
 <rect x="0.75" y="0.75" width="12.5" height="9.5" fill="#e2e2e2" stroke="#c0c0c0" stroke-width="1.5"/>
 <path d="M3 4.5H8M3 6.5H10" stroke="#c4c4c4" stroke-width="1"/>
 <path d="M5 11.5H9" stroke="#c4c4c4" stroke-width="1.2"/>
 <path d="M1 13H13" stroke="#c4c4c4" stroke-width="1.2"/>
</svg>
<div class="a dd ddg" style="left:1253px;top:568px;border-left-width:3.5px;border-right-width:3.5px;border-top-width:4px"></div>
<svg style="left:1274px;top:562px" width="16" height="16" viewBox="0 0 16 16">
 <rect x="0.5" y="3.5" width="13" height="12" fill="#e6f4fc" stroke="#9c8750"/>
 <rect x="0" y="3" width="8" height="2.5" fill="#3c78c0"/>
 <path d="M6 15.5C10 15.5 12.5 12 12 6" stroke="#f8d860" fill="none" stroke-width="1.2"/>
 <path d="M12 0.3L13.2 2.8L15.7 4L13.2 5.2L12 7.7L10.8 5.2L8.3 4L10.8 2.8Z" fill="#fff6c8" stroke="#b88a10" stroke-width="1"/>
</svg>
<div class="a dd" style="left:1301px;top:568px;border-left-width:3.5px;border-right-width:3.5px;border-top-width:4px"></div>
<div class="a" style="left:1321px;top:563px;width:10px;height:4px;border:1px solid #000;border-radius:1px;background:#fff"></div>
<div class="a" style="left:1339px;top:563px;width:10px;height:10px;border:1px solid #000;border-radius:1px;background:linear-gradient(#fff 0,#fff 1px,#000 1px,#000 2px,#fff 2px)"></div>

<!-- ============ PERSPECTIVE SWITCHER ============ -->
<div class="a" style="left:958px;top:86px;width:204px;height:1px;background:linear-gradient(90deg,rgba(255,255,255,0),#fff 60%)"></div>
<svg style="left:1150px;top:40px" width="210" height="50" viewBox="0 0 210 50">
 <path d="M11 46.5C16 46.5 20 43 24 38.8L35 19.5C38 15 42 10.5 49 10.5H210" fill="none" stroke="#fff" stroke-width="1.3"/>
</svg>
<svg style="left:1219px;top:61px" width="16" height="16" viewBox="0 0 16 16">
 <rect x="0.5" y="3.5" width="11" height="11" fill="#f0f8fc" stroke="#7a7050"/>
 <rect x="0" y="3" width="8" height="2.6" fill="#2a68c0"/>
 <path d="M0.5 10.5H11.5M4.5 5.5V14.5" stroke="#8a8060"/>
 <path d="M11 0.5L12.2 3.3L15 4.5L12.2 5.7L11 8.5L9.8 5.7L7 4.5L9.8 3.3Z" fill="#fff6c8" stroke="#b88a10" stroke-width="1"/>
</svg>
<div class="a" style="left:1243px;top:56px;width:51px;height:26px;border:1px solid #a4a4a4;border-radius:3px;background:linear-gradient(#d8d8d8,#d4d4d4 40%,#cdcdcd)"></div>
<svg style="left:1248px;top:61px" width="20" height="18" viewBox="0 0 20 18">
 <rect x="3" y="2.5" width="7" height="6" fill="#f8e0a0" stroke="#9a5a30"/>
 <path d="M6.5 0.5V9.5M1.5 5.5H11.5" stroke="#8a4a20" stroke-width="1.1"/>
 <path d="M15 1V7.5C15 9.5 13.5 10 11.5 9.2" stroke="#2a64a8" stroke-width="1.8" fill="none"/>
 <circle cx="4.5" cy="10.5" r="3.6" fill="#3a9a40" stroke="#1e7a28" stroke-width="0.6"/>
 <path d="M2 10.5H7" stroke="#7ac080" stroke-width="0.8"/>
 <circle cx="9.5" cy="14" r="3" fill="#6a58b8" stroke="#4a3a98" stroke-width="0.6"/>
</svg>
<div class="a ui" style="left:1268px;top:61.5px;font-size:11px;line-height:15px;color:#2a2a3a">Java</div>
<svg style="left:1302px;top:61px" width="16" height="16" viewBox="0 0 16 16">
 <path d="M0.5 0.5H6L8.5 3V11.5H0.5Z" fill="#f6f8fc" stroke="#a8985a"/>
 <path d="M6 0.5V3H8.5Z" fill="#e8d090"/>
 <path d="M2 3.5H4M2 5.5H5M2 7.5H4M2 9.5H4" stroke="#6a8ac0"/>
 <path d="M4.5 6.5A1 1 0 0 1 5.5 5.5H8L9 6.5H14.5A1 1 0 0 1 15.5 7.5V14.5H4.5Z" fill="#fcd888" stroke="#c0781a"/>
 <path d="M5 9H15" stroke="#fff0c0" stroke-width="1"/>
</svg>
<div class="a ui" style="left:1320px;top:61px;font-size:11.5px;line-height:15px;color:#2a2a4a;width:16px;overflow:hidden;letter-spacing:-0.4px">Res</div>
<svg style="left:1342px;top:59px" width="10" height="9" viewBox="0 0 10 9"><path d="M4 1L2.2 7.5M8.6 1L6.8 7.5" stroke="#111" stroke-width="2.2"/></svg>

<!-- ============ STATUS BAR ============ -->
<div class="a" style="left:6px;top:714px;width:3px;height:26px;background:linear-gradient(90deg,#fafafa 0,#fafafa 2px,#a9a9a9 2px)"></div>
<svg style="left:21px;top:720px" width="15" height="15" viewBox="0 0 15 15">
 <rect x="0.5" y="2.5" width="5" height="12" fill="#e6f4fc" stroke="#9c8750"/>
 <rect x="0" y="2" width="6" height="2.5" fill="#3c78c0"/>
 <path d="M11 0L12 2.5L14.5 3.5L12 4.5L11 7L10 4.5L7.5 3.5L10 2.5Z" fill="#f8e080" stroke="#a88020" stroke-width="0.7"/>
</svg>
<div class="a" style="left:691px;top:712px;width:2px;height:26px;background:linear-gradient(90deg,#c6c6c6 0,#c6c6c6 1px,#ececec 1px)"></div>
<div class="a ui" style="left:699px;top:716px;letter-spacing:0.5px">Writable</div>
<div class="a" style="left:810px;top:712px;width:2px;height:26px;background:linear-gradient(90deg,#c6c6c6 0,#c6c6c6 1px,#ececec 1px)"></div>
<div class="a ui" style="left:818px;top:716px">Smart Insert</div>
<div class="a" style="left:922px;top:712px;width:2px;height:26px;background:linear-gradient(90deg,#c6c6c6 0,#c6c6c6 1px,#ececec 1px)"></div>
<div class="a ui" style="left:930px;top:716px;letter-spacing:-0.6px">10 : 22</div>
<div class="a" style="left:1037px;top:712px;width:3px;height:27px;background:linear-gradient(90deg,#fafafa 0,#fafafa 1px,#a8a8a8 1px,#a8a8a8 2px,#f0f0f0 2px)"></div>
</body></html>
